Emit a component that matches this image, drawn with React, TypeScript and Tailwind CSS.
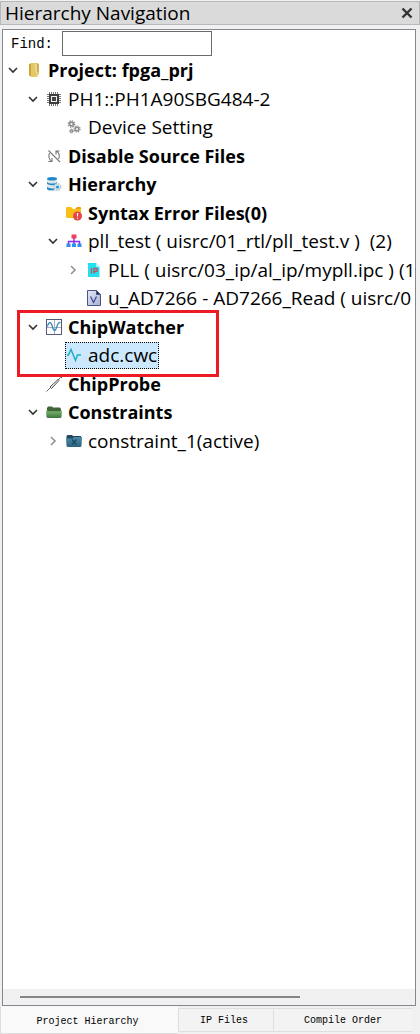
import type { ReactNode } from "react";

const icon = "h-4 w-4 shrink-0";

function ProjectIcon() {
  return (
    <svg viewBox="0 0 16 16" className={icon} aria-hidden="true">
      <path d="M3 2l3-1v14l-3-1.500z" fill="#c9a53c" />
      <path d="M5 1h7.500v11.500L11 15H5z" fill="#e3c768" />
      <path d="M10.500 2h2.500v7l-1 4-1.500 2z" fill="#d1b052" />
      <path d="M10 2v7l1 1v5" fill="none" stroke="#f8eab0" strokeWidth="1" />
    </svg>
  );
}

function ChipIcon() {
  return (
    <svg viewBox="0 0 16 16" className={icon} aria-hidden="true">
      <path d="M3.500 1v14M5.500 1v14M7.500 1v14M9.500 1v14M11.500 1v14M1 3.500h14M1 5.500h14M1 7.500h14M1 9.500h14M1 11.500h14" stroke="#777" strokeWidth="1" />
      <rect x="3" y="3" width="10" height="10" fill="#3e3e3e" />
      <rect x="5" y="5" width="6" height="6" fill="#f2f2f2" />
      <rect x="6" y="6" width="4" height="4" fill="#444" />
    </svg>
  );
}

function GearsIcon() {
  return (
    <svg viewBox="0 0 16 16" className={icon} fill="none" stroke="#8f8f8f" aria-hidden="true">
      <circle cx="5.500" cy="5" r="1.900" strokeWidth="1.700" />
      <circle cx="5.500" cy="5" r="3.200" strokeWidth="1.300" strokeDasharray="1.400 1.110" />
      <circle cx="5.500" cy="12" r="1.100" strokeWidth="1.200" />
      <circle cx="5.500" cy="12" r="1.900" strokeDasharray="1 .5" />
      <circle cx="11" cy="10" r="1.800" strokeWidth="1.600" />
      <circle cx="11" cy="10" r="3" strokeWidth="1.300" strokeDasharray="1.300 1.060" />
    </svg>
  );
}

function DisabledIcon() {
  return (
    <svg viewBox="0 0 16 16" className={icon} fill="none" stroke="#777" strokeWidth="1.100" aria-hidden="true">
      <path d="M2.500 2.500l11.500 11.500" />
      <path d="M6 13.500C3 12 2 8 3.500 5M2.500 13.500H6V10" />
      <path d="M10 3c3.500 1.500 4 5 2.500 8M13.500 3H10v3.500" />
    </svg>
  );
}

function DatabaseIcon() {
  return (
    <svg viewBox="0 0 16 16" className={icon} aria-hidden="true">
      <path d="M1 3v10c0 3 10 3 10 0V3z" fill="#dfe6ea" />
      <ellipse cx="6" cy="2.800" rx="5" ry="1.800" fill="#1c87c9" />
      <path d="M1 6c2 2 8 2 10 0v1.800c-2 1.800-8 1.800-10 0zM1 11c2 1.500 5 1.700 7 1.200v1.800c-3 .6-6 .5-7-1z" fill="#2287c4" />
      <circle cx="11.500" cy="11" r="3.300" fill="#dce9f2" stroke="#b4c2cc" strokeWidth="1.500" strokeDasharray="1.500 1.090" />
      <circle cx="11.500" cy="11" r="1.600" fill="#2096e6" />
    </svg>
  );
}

function ErrorFolderIcon() {
  return (
    <svg viewBox="0 0 16 16" className={icon} aria-hidden="true">
      <path d="M0 3q0-1 1-1h4l2 2h7q1 0 1 1v7q0 1-1 1H1q-1 0-1-1z" fill="#f9bf16" />
      <path d="M9 4l2-2h3q1 0 1 1v1z" fill="#f59b0b" />
      <circle cx="11.500" cy="11" r="4.500" fill="#e64444" />
      <path d="M11.500 8v3.500M11.500 12.700v1" stroke="#fff" strokeWidth="1.200" />
    </svg>
  );
}

function ModuleIcon() {
  return (
    <svg viewBox="0 0 16 16" className={icon} fill="none" aria-hidden="true">
      <path d="M8 5v6M2.500 11V8.500h11V11" stroke="#8b2cf0" strokeWidth="1.500" />
      <rect x="5.500" y="1.500" width="5" height="4" fill="#f0405a" />
      <path d="M.5 10.500h4v3.500h-4zM6 10.500h4v3.500H6zM11.500 10.500h4v3.500h-4z" fill="#2f8cf4" />
    </svg>
  );
}

function IpIcon() {
  return (
    <svg viewBox="0 0 16 16" className={icon} aria-hidden="true">
      <path d="M2 1h8l3.500 4v10H2z" fill="#22e0f0" />
      <path d="M10 1l3.500 4H10z" fill="#a6f6fb" />
      <path d="M5.500 6v5.500M8 11.500V6.500h2q1.500 0 1.500 1.500T10 9.500H8" fill="none" stroke="#c34e5f" strokeWidth="1.300" />
    </svg>
  );
}

function VerilogIcon() {
  return (
    <svg viewBox="0 0 16 16" className={icon} aria-hidden="true">
      <defs>
        <linearGradient id="verilog" x1="0" y1="0" x2="1" y2="1">
          <stop offset="0" stopColor="#e6ebf8" />
          <stop offset="1" stopColor="#a4aed2" />
        </linearGradient>
      </defs>
      <path d="M1.500 .5h9l4 4v11h-13z" fill="url(#verilog)" stroke="#4e547d" />
      <path d="M10.500 .5v4h4z" fill="#26305e" stroke="#4e547d" />
      <path d="M4.500 6.500L7.500 12.500l3-6" fill="none" stroke="#3d438c" strokeWidth="1.200" />
    </svg>
  );
}

function WatcherIcon() {
  return (
    <svg viewBox="0 0 16 16" className={icon} fill="none" aria-hidden="true">
      <rect x=".5" y=".5" width="15" height="15" fill="#fff" stroke="#57597c" />
      <path d="M8.500 1v14M1 8.500h14" stroke="#a9abc0" />
      <path d="M1.500 7.500C2.500 2.500 5 2.500 6 6.500s2.500 7 4 3.500 1.500-7 4.500-6.500" stroke="#2e86b8" strokeWidth="1.200" />
    </svg>
  );
}

function WaveIcon() {
  return (
    <svg viewBox="0 0 16 16" className={icon} fill="none" aria-hidden="true">
      <path d="M1 8h1.500L5 2.500l4.500 11L11.500 8H15" stroke="#20afc2" strokeWidth="1.500" />
    </svg>
  );
}

function ProbeIcon() {
  return (
    <svg viewBox="0 0 16 16" className={icon} fill="none" aria-hidden="true">
      <path d="M.5 15.500L5 11" stroke="#666" />
      <path d="M4 11l8-7.500 1 1L5.500 12.500z" fill="#eee" stroke="#555" />
      <path d="M12 4l2.500-2.500H16" stroke="#555" />
    </svg>
  );
}

function GreenFolderIcon() {
  return (
    <svg viewBox="0 0 16 16" className={icon} aria-hidden="true">
      <defs>
        <linearGradient id="green" x1="0" y1="0" x2="0" y2="1">
          <stop offset="0" stopColor="#82b96e" />
          <stop offset=".45" stopColor="#5d9c55" />
          <stop offset="1" stopColor="#3f7340" />
        </linearGradient>
      </defs>
      <path d="M1 4l1-1.500h4l1 1h7l1 1.500v3H1z" fill="#3f6539" />
      <path d="M0 6.500l3 .7h10l3-.7-.5 6.500-1 1h-13l-1-1z" fill="url(#green)" />
    </svg>
  );
}

function BlueFolderIcon() {
  return (
    <svg viewBox="0 0 16 16" className={icon} aria-hidden="true">
      <defs>
        <linearGradient id="blue" x1="0" y1="0" x2="0" y2="1">
          <stop offset="0" stopColor="#4c8cab" />
          <stop offset="1" stopColor="#2b637e" />
        </linearGradient>
      </defs>
      <path d="M.5 3l1-1h4.500l1 1h8l.5 3H.5z" fill="#24485b" />
      <path d="M0 5.500h6.500L8 4h8l-.5 9-1 1h-13l-1-1z" fill="url(#blue)" />
      <path d="M6 6.500l4.500 5M10.500 6.500l-4.500 5" stroke="#1d485f" strokeWidth="1.200" />
    </svg>
  );
}

function Chevron({ open }: { open: boolean }) {
  return (
    <svg viewBox="0 0 10 10" className="h-2.5 w-2.5" fill="none" aria-hidden="true">
      {open ? (
        <path d="M1 3l4 4 4-4" stroke="#333" strokeWidth="1.600" />
      ) : (
        <path d="M3 1l4 4-4 4" stroke="#929292" strokeWidth="1.600" />
      )}
    </svg>
  );
}

type Row = {
  level: number;
  label: string;
  icon: ReactNode;
  open?: boolean;
  bold?: boolean;
  selected?: boolean;
  marked?: boolean;
};

const rows: Row[] = [
  { level: 0, label: "Project: fpga_prj", icon: <ProjectIcon />, open: true, bold: true },
  { level: 1, label: "PH1::PH1A90SBG484-2", icon: <ChipIcon />, open: true },
  { level: 2, label: "Device Setting", icon: <GearsIcon /> },
  { level: 1, label: "Disable Source Files", icon: <DisabledIcon />, bold: true },
  { level: 1, label: "Hierarchy", icon: <DatabaseIcon />, open: true, bold: true },
  { level: 2, label: "Syntax Error Files(0)", icon: <ErrorFolderIcon />, bold: true },
  { level: 2, label: "pll_test ( uisrc/01_rtl/pll_test.v )  (2)", icon: <ModuleIcon />, open: true },
  { level: 3, label: "PLL ( uisrc/03_ip/al_ip/mypll.ipc ) (1", icon: <IpIcon />, open: false },
  { level: 3, label: "u_AD7266 - AD7266_Read ( uisrc/0", icon: <VerilogIcon /> },
  { level: 1, label: "ChipWatcher", icon: <WatcherIcon />, open: true, bold: true, marked: true },
  { level: 2, label: "adc.cwc", icon: <WaveIcon />, selected: true },
  { level: 1, label: "ChipProbe", icon: <ProbeIcon />, bold: true },
  { level: 1, label: "Constraints", icon: <GreenFolderIcon />, open: true, bold: true },
  { level: 2, label: "constraint_1(active)", icon: <BlueFolderIcon />, open: false },
];

const indents = ["pl-0", "pl-5", "pl-10", "pl-[60px]"];

function TreeRow({ row }: { row: Row }) {
  return (
    <li
      role="treeitem"
      aria-level={row.level + 1}
      aria-expanded={row.open}
      aria-selected={row.selected ?? false}
      className={`relative flex items-center ${indents[row.level]}`}
    >
      <span className="flex w-5 shrink-0 justify-center">
        {row.open !== undefined && (
          <button type="button" aria-label={`Toggle ${row.label}`}>
            <Chevron open={row.open} />
          </button>
        )}
      </span>
      <span
        className={`ml-0.5 flex h-[27px] items-center gap-1.5 border border-dotted pr-px whitespace-pre ${
          row.selected ? "border-black bg-[#cce8ff]" : "border-transparent"
        } ${row.bold ? "text-lg font-bold" : "text-[19px]"}`}
      >
        {row.icon}
        <span>{row.label}</span>
      </span>
      {row.marked && (
        <span className="pointer-events-none absolute -top-[3px] left-3.5 z-10 h-[67px] w-[202px] border-3 border-[#ed1c24]" />
      )}
    </li>
  );
}

export default function App() {
  return (
    <main className="flex min-h-screen flex-col bg-[#f0f0f0] pt-px font-['Open_Sans',sans-serif] text-black">
      <header className="flex h-6 items-center justify-between border border-[#b8b8b8] bg-[#dadada] pr-1.5 pl-1">
        <h1 className="text-[19px]">Hierarchy Navigation</h1>
        <button type="button" aria-label="Close">
          <svg viewBox="0 0 12 12" className="h-3 w-3" aria-hidden="true">
            <path d="M1.500 1.500l9 9M10.500 1.500l-9 9" stroke="#333" strokeWidth="2.400" />
          </svg>
        </button>
      </header>

      <section className="mt-1 mr-1 ml-0.5 flex flex-1 flex-col border border-[#828790] bg-white">
        <div className="flex items-center gap-[9px] pt-px pl-2">
          <label htmlFor="find" className="font-['Liberation_Mono',monospace] text-sm">
            Find:
          </label>
          <input id="find" type="text" className="h-[25px] w-[150px] border border-[#6b6b6b] bg-white px-1 text-sm outline-none" />
        </div>

        <ul role="tree" aria-label="Project hierarchy" className="grid h-[399px] auto-rows-fr">
          {rows.map((row) => (
            <TreeRow key={row.label} row={row} />
          ))}
        </ul>

        <div className="mt-auto flex h-4 items-center bg-[#f0f0f0] pr-[115px] pl-[17px]">
          <div className="h-0.5 w-full bg-[#858585]" />
        </div>
      </section>

      <nav role="tablist" className="flex h-7 items-start pr-2 font-['Liberation_Mono',monospace] text-[10px]">
        <button type="button" role="tab" aria-selected="true" className="h-full w-[178px] border-b border-l border-[#dedede] bg-[#f9f9f9] pt-1 pr-1">
          Project Hierarchy
        </button>
        <button type="button" role="tab" aria-selected="false" className="mt-0.5 h-6 w-24 border border-[#dfdfdf] bg-[#f3f3f3] pr-1">
          IP Files
        </button>
        <button type="button" role="tab" aria-selected="false" className="mt-0.5 h-6 flex-1 border-y border-[#dfdfdf] bg-[#f3f3f3]">
          Compile Order
        </button>
      </nav>
    </main>
  );
}
